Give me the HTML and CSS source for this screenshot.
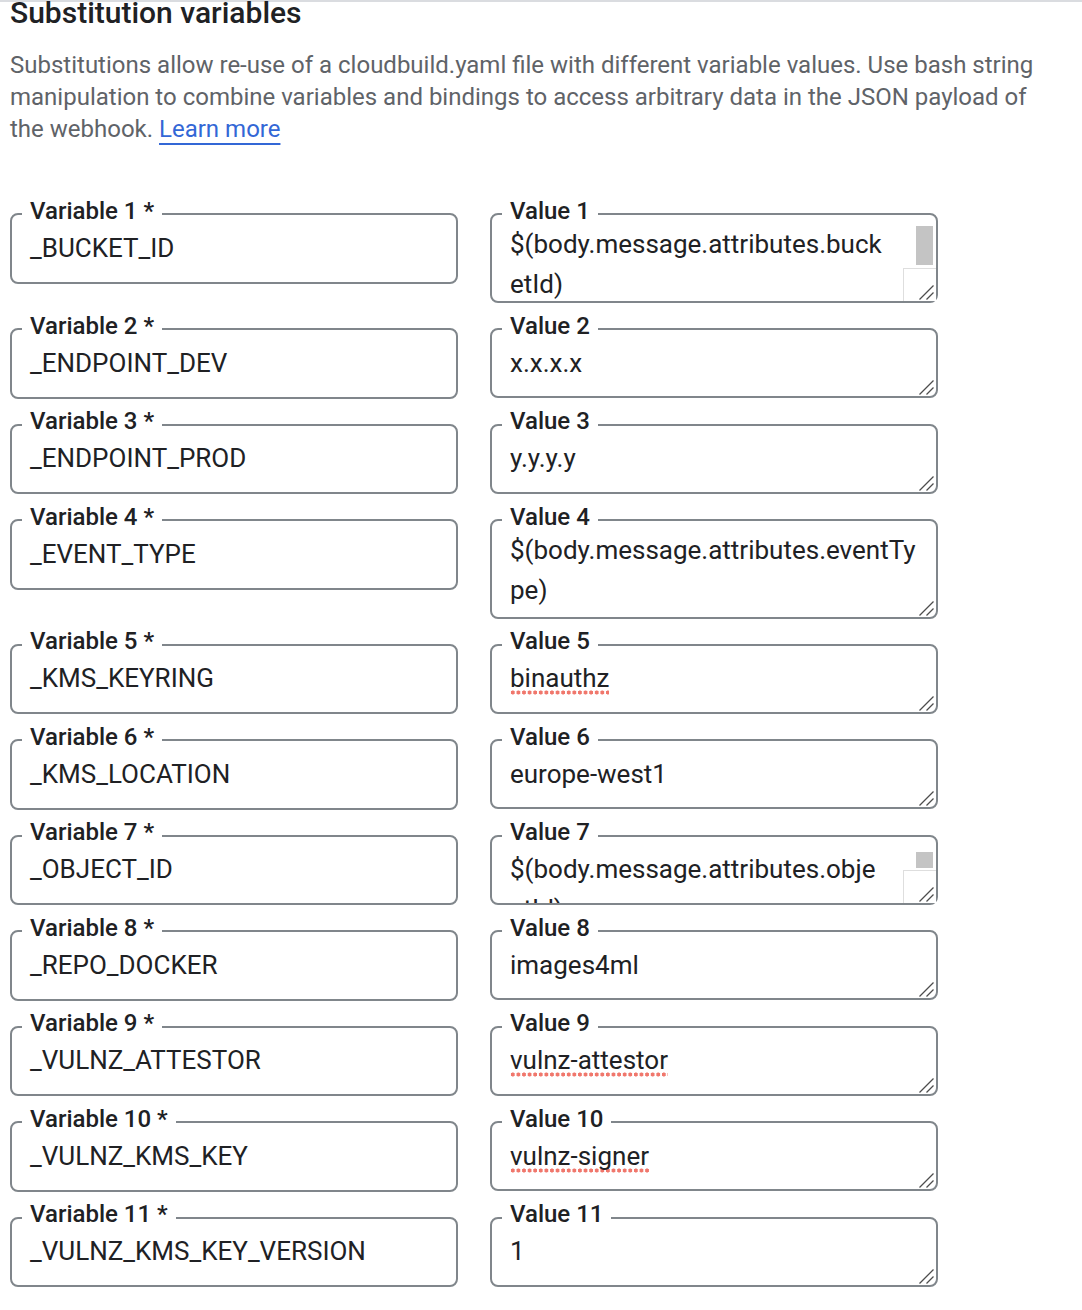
FILE: index.html
```html
<!DOCTYPE html>
<html lang="en">
<head>
<meta charset="utf-8">
<title>Substitution variables</title>
<link rel="stylesheet" href="styles.css">
</head>
<body>
<main class="page">
  <h2 class="title">Substitution variables</h2>
  <p class="desc">Substitutions allow re-use of a cloudbuild.yaml file with different variable values. Use bash string manipulation to combine variables and bindings to access arbitrary data in the JSON payload of the webhook. <a class="link" href="#">Learn more</a></p>

  <div class="grid">
    <fieldset class="field"><legend>Variable 1 *</legend><div class="val">_BUCKET_ID</div></fieldset>
    <fieldset class="field area tall1 has-sb"><legend>Value 1</legend><div class="ta"><div class="txt">$(body.message.attributes.bucketId)</div></div><span class="thumb"></span><span class="corner"></span><svg class="grip" viewBox="0 0 16 16"><path d="M1.5 15.5 L15.5 1.5 M8.5 15.5 L15.5 8.5"/></svg></fieldset>

    <fieldset class="field"><legend>Variable 2 *</legend><div class="val">_ENDPOINT_DEV</div></fieldset>
    <fieldset class="field area"><legend>Value 2</legend><div class="ta"><div class="txt">x.x.x.x</div></div><svg class="grip" viewBox="0 0 16 16"><path d="M1.5 15.5 L15.5 1.5 M8.5 15.5 L15.5 8.5"/></svg></fieldset>

    <fieldset class="field"><legend>Variable 3 *</legend><div class="val">_ENDPOINT_PROD</div></fieldset>
    <fieldset class="field area"><legend>Value 3</legend><div class="ta"><div class="txt">y.y.y.y</div></div><svg class="grip" viewBox="0 0 16 16"><path d="M1.5 15.5 L15.5 1.5 M8.5 15.5 L15.5 8.5"/></svg></fieldset>

    <fieldset class="field"><legend>Variable 4 *</legend><div class="val">_EVENT_TYPE</div></fieldset>
    <fieldset class="field area tall4"><legend>Value 4</legend><div class="ta"><div class="txt">$(body.message.attributes.eventType)</div></div><svg class="grip" viewBox="0 0 16 16"><path d="M1.5 15.5 L15.5 1.5 M8.5 15.5 L15.5 8.5"/></svg></fieldset>

    <fieldset class="field"><legend>Variable 5 *</legend><div class="val">_KMS_KEYRING</div></fieldset>
    <fieldset class="field area"><legend>Value 5</legend><div class="ta"><div class="txt"><span class="spell">binauthz</span></div></div><svg class="grip" viewBox="0 0 16 16"><path d="M1.5 15.5 L15.5 1.5 M8.5 15.5 L15.5 8.5"/></svg></fieldset>

    <fieldset class="field"><legend>Variable 6 *</legend><div class="val">_KMS_LOCATION</div></fieldset>
    <fieldset class="field area"><legend>Value 6</legend><div class="ta"><div class="txt">europe-west1</div></div><svg class="grip" viewBox="0 0 16 16"><path d="M1.5 15.5 L15.5 1.5 M8.5 15.5 L15.5 8.5"/></svg></fieldset>

    <fieldset class="field"><legend>Variable 7 *</legend><div class="val">_OBJECT_ID</div></fieldset>
    <fieldset class="field area has-sb sb7"><legend>Value 7</legend><div class="ta"><div class="txt">$(body.message.attributes.objectId)</div></div><span class="thumb"></span><span class="corner"></span><svg class="grip" viewBox="0 0 16 16"><path d="M1.5 15.5 L15.5 1.5 M8.5 15.5 L15.5 8.5"/></svg></fieldset>

    <fieldset class="field"><legend>Variable 8 *</legend><div class="val">_REPO_DOCKER</div></fieldset>
    <fieldset class="field area"><legend>Value 8</legend><div class="ta"><div class="txt">images4ml</div></div><svg class="grip" viewBox="0 0 16 16"><path d="M1.5 15.5 L15.5 1.5 M8.5 15.5 L15.5 8.5"/></svg></fieldset>

    <fieldset class="field"><legend>Variable 9 *</legend><div class="val">_VULNZ_ATTESTOR</div></fieldset>
    <fieldset class="field area"><legend>Value 9</legend><div class="ta"><div class="txt"><span class="spell">vulnz-attestor</span></div></div><svg class="grip" viewBox="0 0 16 16"><path d="M1.5 15.5 L15.5 1.5 M8.5 15.5 L15.5 8.5"/></svg></fieldset>

    <fieldset class="field"><legend>Variable 10 *</legend><div class="val">_VULNZ_KMS_KEY</div></fieldset>
    <fieldset class="field area"><legend>Value 10</legend><div class="ta"><div class="txt"><span class="spell">vulnz-signer</span></div></div><svg class="grip" viewBox="0 0 16 16"><path d="M1.5 15.5 L15.5 1.5 M8.5 15.5 L15.5 8.5"/></svg></fieldset>

    <fieldset class="field"><legend>Variable 11 *</legend><div class="val">_VULNZ_KMS_KEY_VERSION</div></fieldset>
    <fieldset class="field area"><legend>Value 11</legend><div class="ta"><div class="txt">1</div></div><svg class="grip" viewBox="0 0 16 16"><path d="M1.5 15.5 L15.5 1.5 M8.5 15.5 L15.5 8.5"/></svg></fieldset>
  </div>
</main>
</body>
</html>
```

FILE: styles.css
```css
* { box-sizing: border-box; }

html, body {
  margin: 0;
  background: #ffffff;
}

body {
  font-family: Roboto, "Liberation Sans", Arial, sans-serif;
  color: #202124;
}

.page {
  border-top: 2px solid #dadce0;
  padding: 0 10px 20px;
}

.title {
  margin: -3px 0 0;
  font-size: 30px;
  line-height: 28px;
  font-weight: 500;
  color: #202124;
}

.desc {
  margin: 22px 0 0;
  max-width: 1040px;
  font-size: 24px;
  line-height: 32px;
  color: #5f6368;
}

.link {
  color: #3367d6;
  text-decoration: underline;
  text-decoration-thickness: 2px;
  text-underline-offset: 6px;
}

.grid {
  display: grid;
  grid-template-columns: 448px 448px;
  column-gap: 32px;
  row-gap: 10.5px;
  margin-top: 53.5px;
  align-items: start;
}

.field {
  position: relative;
  margin: 0;
  min-width: 0;
  border: 2px solid #80868b;
  border-radius: 8px;
  padding: 0 18px 14px;
}

.field legend {
  margin-left: -8px;
  padding: 0 8px 7px;
  font-size: 24px;
  line-height: 24px;
  font-weight: 500;
  color: #202124;
}

.val {
  margin-top: -2px;
  font-size: 26px;
  line-height: 40px;
  color: #202124;
  white-space: nowrap;
}

.area {
  padding-bottom: 0;
}

.ta {
  height: 51.5px;
  overflow: hidden;
  font-size: 26px;
  line-height: 40px;
  color: #202124;
}

.ta .txt {
  width: 410px;
  word-break: break-all;
  margin-top: -2px;
}

.tall1 .ta { height: 71.5px; }
.tall4 .ta { height: 81px; }
.tall1 .txt, .tall4 .txt { margin-top: -6px; }

.has-sb .ta .txt { width: 374px; }

.thumb {
  position: absolute;
  right: 3px;
  width: 17px;
  background: #c4c4c4;
}

.tall1 .thumb { bottom: 36px; height: 39px; }
.sb7 .thumb { bottom: 35px; height: 16px; }

.corner {
  position: absolute;
  right: 0;
  bottom: 0;
  width: 33px;
  height: 33px;
  border-top: 1px solid #dedede;
  border-left: 1px solid #dedede;
  background: #ffffff;
}

.grip {
  position: absolute;
  right: 2px;
  bottom: 1px;
  width: 16px;
  height: 16px;
  fill: none;
  stroke: #4d4d4d;
  stroke-width: 1.3;
}

.spell {
  background-image: radial-gradient(circle at center, #f0776c 0 1.8px, transparent 2.3px);
  background-size: 5.6px 5px;
  background-repeat: repeat-x;
  background-position: 0 100%;
  padding-bottom: 2px;
}
```
